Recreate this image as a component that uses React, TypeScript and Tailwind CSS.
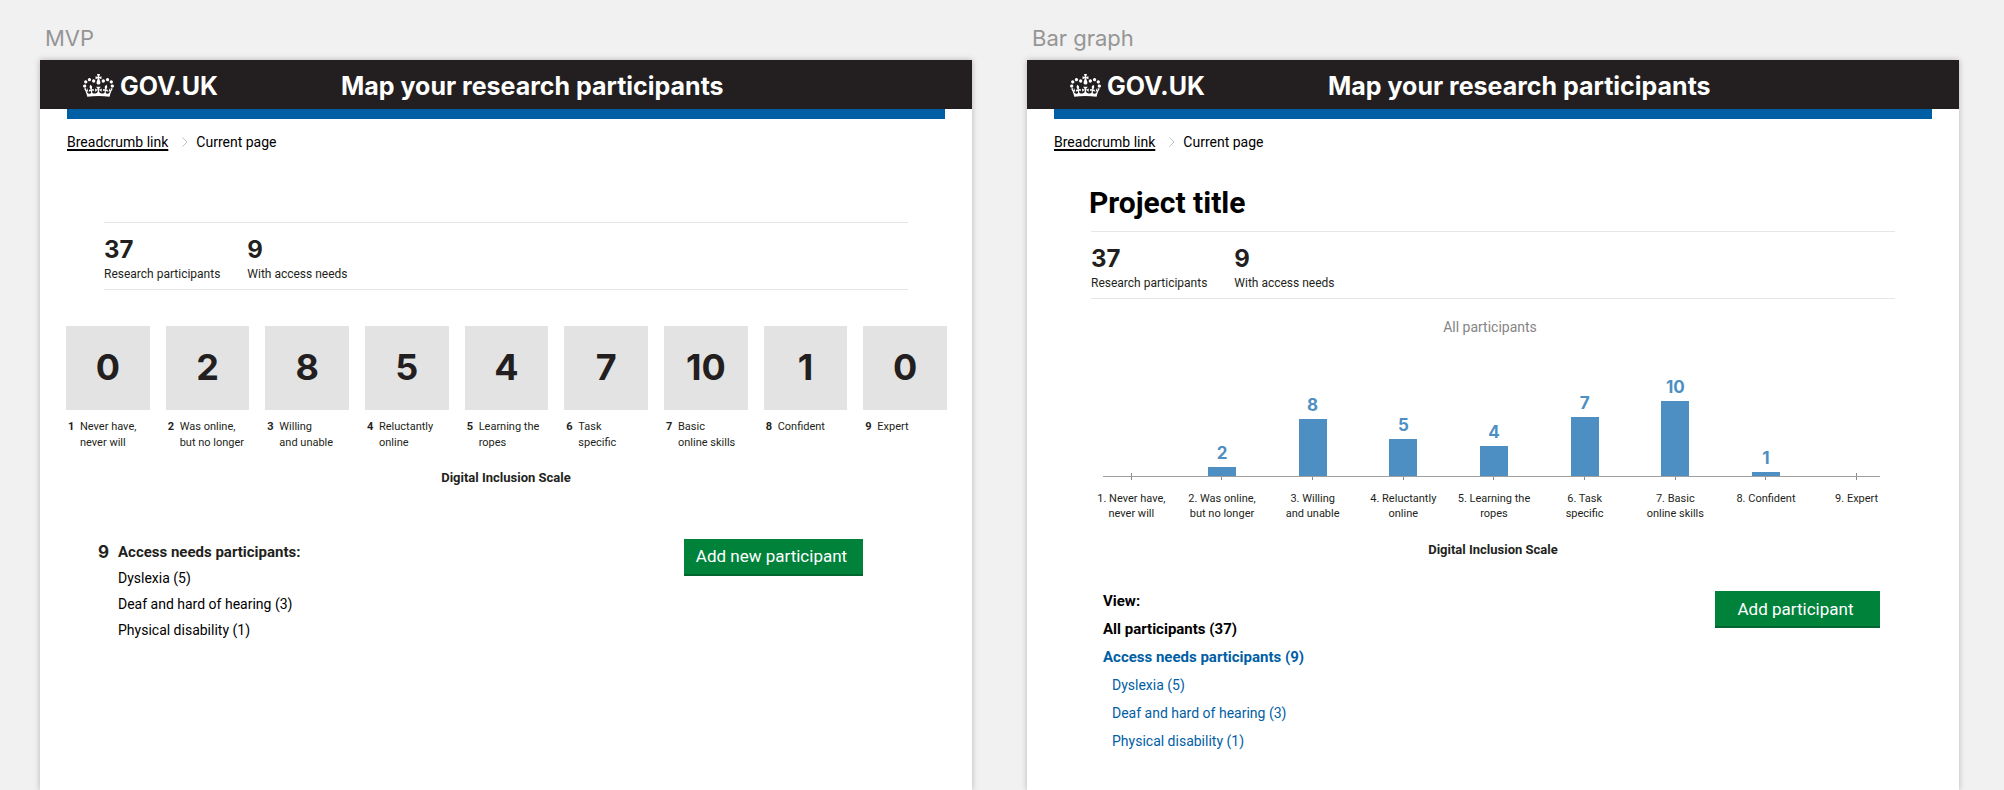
import type { ReactNode } from "react";

type Level = { count: number; lines: string[] };

const levels: Level[] = [
  { count: 0, lines: ["Never have,", "never will"] },
  { count: 2, lines: ["Was online,", "but no longer"] },
  { count: 8, lines: ["Willing", "and unable"] },
  { count: 5, lines: ["Reluctantly", "online"] },
  { count: 4, lines: ["Learning the", "ropes"] },
  { count: 7, lines: ["Task", "specific"] },
  { count: 10, lines: ["Basic", "online skills"] },
  { count: 1, lines: ["Confident"] },
  { count: 0, lines: ["Expert"] },
];

// Bar heights in pixels, one for each level of the scale.
const barHeights = [0, 9, 57, 37, 30, 59, 75, 4, 0];

const accessNeeds = ["Dyslexia (5)", "Deaf and hard of hearing (3)", "Physical disability (1)"];

function Crown() {
  return (
    <svg viewBox="0 0 132 97" className="h-[23px] w-[31px]" fill="currentColor" fillRule="evenodd" aria-hidden="true">
      <path d="M25 30.2c3.5 1.5 7.7-.2 9.1-3.7 1.5-3.6-.2-7.8-3.9-9.2-3.6-1.4-7.6.3-9.1 3.9-1.4 3.5.3 7.5 3.9 9zM9 39.5c3.6 1.5 7.8-.2 9.2-3.7 1.5-3.6-.2-7.8-3.9-9.1-3.6-1.5-7.6.2-9.1 3.8-1.4 3.5.3 7.5 3.8 9zM4.4 57.2c3.5 1.5 7.7-.2 9.1-3.8 1.5-3.6-.2-7.7-3.9-9.1-3.5-1.5-7.6.3-9.1 3.8-1.4 3.5.3 7.6 3.9 9.1zm38.3-21.4c3.5 1.5 7.7-.2 9.1-3.8 1.5-3.6-.2-7.7-3.9-9.1-3.6-1.5-7.6.3-9.1 3.8-1.3 3.6.4 7.7 3.9 9.1zm64.4-5.6c-3.6 1.5-7.8-.2-9.1-3.7-1.5-3.6.2-7.8 3.8-9.2 3.6-1.4 7.7.3 9.2 3.9 1.3 3.5-.4 7.5-3.9 9zm15.9 9.3c-3.6 1.5-7.7-.2-9.1-3.7-1.5-3.6.2-7.8 3.7-9.1 3.6-1.5 7.7.2 9.2 3.8 1.5 3.5-.3 7.5-3.8 9zm4.7 17.7c-3.6 1.5-7.8-.2-9.2-3.8-1.5-3.6.2-7.7 3.9-9.1 3.6-1.5 7.7.3 9.2 3.8 1.3 3.5-.4 7.6-3.9 9.1zM89.3 35.8c-3.6 1.5-7.8-.2-9.2-3.8-1.4-3.6.2-7.7 3.9-9.1 3.6-1.5 7.7.3 9.2 3.8 1.4 3.6-.3 7.7-3.9 9.1zM69.7 17.7l8.9 4.7V9.3l-8.9 2.8c-.2-.3-.5-.6-.9-.9L72.4 0H59.6l3.5 11.2c-.3.3-.6.5-.9.9l-8.8-2.8v13.1l8.8-4.7c.3.3.6.7.9.9l-5 15.4v.1c-.2.8-.4 1.6-.4 2.4 0 4.1 3.1 7.5 7 8.1h.2c.3 0 .7.1 1 .1.4 0 .7 0 1-.1h.2c4-.6 7.1-4.1 7.1-8.1 0-.8-.1-1.7-.4-2.4V34l-5.1-15.4c.4-.2.7-.6 1-.9zM66 92.8c16.9 0 32.8 1.1 47.1 3.2 4-16.9 8.9-26.7 14-33.5l-9.6-3.4c1 4.9 1.1 7.2 0 10.2-1.5-1.4-3-4.3-4.2-8.7L108.6 76c2.8-2 5-3.2 7.5-3.3-4.4 9.4-10 11.9-13.6 11.2-4.3-.8-6.3-4.6-5.6-7.9 1-4.7 5.7-5.9 8-.5 4.3-8.7-3-11.4-7.6-8.8 7.1-7.2 7.9-13.5 2.1-21.1-8 6.1-8.1 12.3-4.5 20.8-4.7-5.4-12.1-2.5-9.5 6.2 3.4-5.2 7.9-2 7.2 3.1-.6 4.3-6.4 7.8-13.5 7.2-10.3-.9-10.9-8-11.2-13.8 2.5-.5 7.1 1.8 11 7.3L80.2 60c-4.1 4.4-8 5.3-12.3 5.4 1.4-4.4 8-11.6 8-11.6H55.5s6.4 7.2 7.9 11.6c-4.2-.1-8-1-12.3-5.4l1.4 16.4c3.9-5.5 8.5-7.7 10.9-7.3-.3 5.8-.9 12.8-11.1 13.8-7.2.6-12.9-2.9-13.5-7.2-.7-5 3.8-8.3 7.1-3.1 2.7-8.7-4.6-11.6-9.4-6.2 3.7-8.5 3.6-14.7-4.6-20.8-5.8 7.6-5 13.9 2.2 21.1-4.7-2.6-11.9.1-7.7 8.8 2.3-5.5 7.1-4.2 8.1.5.7 3.3-1.3 7.1-5.7 7.9-3.5.7-9-1.8-13.5-11.2 2.5.1 4.7 1.3 7.5 3.3l-4.7-15.4c-1.2 4.4-2.7 7.2-4.3 8.7-1.1-3-.9-5.3 0-10.2l-9.5 3.4c5 6.9 9.9 16.7 14 33.5 14.8-2.1 30.8-3.2 47.7-3.2z" />
    </svg>
  );
}

function Board({ name, children }: { name: string; children: ReactNode }) {
  return (
    <section className="flex min-w-0 flex-1 flex-col">
      <h2 className="mb-2 pl-[5px] font-['Inter',sans-serif] text-[22px] leading-7 font-normal text-[#959595]">{name}</h2>
      <div className="flex-1 bg-white shadow-[0_0_6px_rgba(0,0,0,0.25)]">
        <header className="flex h-[49px] items-center bg-[#231f20] pt-0.5 pl-[43px] font-['Inter',sans-serif] text-[25px] leading-9 font-bold text-white">
          <a href="#" className="flex w-[258px] items-center gap-1.5">
            <Crown />
            GOV.UK
          </a>
          <p className="whitespace-nowrap">Map your research participants</p>
        </header>
        <div className="mx-[27px] h-2.5 bg-[#005ea5]" />
        <nav aria-label="Breadcrumb" className="mt-3 flex items-center pl-[27px] text-sm leading-[22px] text-black">
          <a href="#" className="underline decoration-2 underline-offset-2">
            Breadcrumb link
          </a>
          <svg viewBox="0 0 6 10" className="mr-2 ml-3.5 h-2.5 w-1.5" fill="none" stroke="#bfc1c3" aria-hidden="true">
            <path d="M.5.5 5 5 .5 9.5" />
          </svg>
          <span>Current page</span>
        </nav>
        {children}
      </div>
    </section>
  );
}

function Stats() {
  return (
    <dl className="mx-16 flex gap-[27px] border-y border-[#e6e6e6] pt-[13px] pb-[5px]">
      {[
        ["37", "Research participants"],
        ["9", "With access needs"],
      ].map(([value, label]) => (
        <div key={label} className="flex flex-col-reverse">
          <dt className="text-xs leading-5">{label}</dt>
          <dd className="font-['Inter',sans-serif] text-2xl leading-7 font-bold">{value}</dd>
        </div>
      ))}
    </dl>
  );
}

function TileBoard() {
  return (
    <Board name="MVP">
      <div className="mt-[69px]">
        <Stats />
      </div>
      <ol className="mt-9 mr-[25px] ml-[26px] grid grid-cols-9 gap-4">
        {levels.map((level, i) => (
          <li key={level.lines[0]}>
            <div className="flex aspect-square items-center justify-center bg-[#e3e3e3] pb-0.5 font-['Inter',sans-serif] text-4xl font-bold">
              {level.count}
            </div>
            <div className="mt-[9px] flex pl-0.5 text-[11px] leading-4 whitespace-nowrap">
              <span className="w-3 font-bold">{i + 1}</span>
              <span>
                {level.lines.map((line) => (
                  <span key={line} className="block">
                    {line}
                  </span>
                ))}
              </span>
            </div>
          </li>
        ))}
      </ol>
      <p className="mt-[17px] text-center text-[13px] leading-5 font-bold">Digital Inclusion Scale</p>
      <div className="mt-[51px] flex items-start justify-between pr-[109px] pl-[58px]">
        <div className="flex leading-[26px]">
          <span className="w-5 font-['Inter',sans-serif] text-[17px] font-bold">9</span>
          <div className="text-sm leading-[26px]">
            <h3 className="text-[15px] leading-[26px] font-bold">Access needs participants:</h3>
            <ul className="text-black">
              {accessNeeds.map((need) => (
                <li key={need}>{need}</li>
              ))}
            </ul>
          </div>
        </div>
        <button
          type="button"
          className="h-[37px] w-[179px] border-b-2 border-[#00652f] bg-[#00823b] pt-0.5 pr-1 text-[17px] text-white"
        >
          Add new participant
        </button>
      </div>
    </Board>
  );
}

function GraphBoard() {
  return (
    <Board name="Bar graph">
      <h1 className="mt-8 mb-2.5 ml-[62px] text-[30px] leading-9 font-bold text-black">Project title</h1>
      <Stats />
      <p className="mt-[18px] pr-1.5 text-center text-sm leading-5 text-[#858585]">All participants</p>
      <div className="mr-[57px] ml-[59px]">
        <div className="grid h-[139px] grid-cols-9 items-end">
          {levels.map((level, i) => (
            <div key={level.lines[0]} className="flex flex-col items-center">
              {level.count > 0 ? (
                <>
                  <span className="mb-1 font-['Inter',sans-serif] text-[17px] leading-5 font-bold text-[#4d8fc3]">
                    {level.count}
                  </span>
                  <div className="w-7 bg-[#4d8fc3]" style={{ height: barHeights[i] }} />
                </>
              ) : (
                <div className="h-[3px] w-px bg-[#8a8a8a]" />
              )}
            </div>
          ))}
        </div>
        <div className="mr-[22px] ml-[17px] h-px bg-[#a0a0a0]" />
        <ol className="grid grid-cols-9 text-center text-[11px] leading-[15px] whitespace-nowrap">
          {levels.map((level, i) => (
            <li key={level.lines[0]} className="flex flex-col items-center">
              <span className="mb-[11px] h-[3px] w-px bg-[#8a8a8a]" />
              {level.lines.map((line, n) => (
                <span key={line}>{n === 0 ? `${i + 1}. ${line}` : line}</span>
              ))}
            </li>
          ))}
        </ol>
      </div>
      <p className="mt-[19px] text-center text-[13px] leading-5 font-bold">Digital Inclusion Scale</p>
      <div className="mt-[27px] flex items-start justify-between pr-[79px] pl-[76px]">
        <div className="text-sm leading-7 text-[#005ea5]">
          <h3 className="text-[15px] leading-7 font-bold text-black">View:</h3>
          <ul>
            <li className="text-[15px] leading-7 font-bold text-black">All participants (37)</li>
            <li>
              <a href="#" className="block text-[15px] leading-7 font-bold">
                Access needs participants (9)
              </a>
              <ul className="pl-[9px]">
                {accessNeeds.map((need) => (
                  <li key={need}>
                    <a href="#">{need}</a>
                  </li>
                ))}
              </ul>
            </li>
          </ul>
        </div>
        <button
          type="button"
          className="mt-1 h-[37px] w-[165px] border-b-2 border-[#00652f] bg-[#00823b] pt-0.5 pr-1 text-[17px] text-white"
        >
          Add participant
        </button>
      </div>
    </Board>
  );
}

export default function App() {
  return (
    <main className="flex min-h-screen gap-[55px] bg-[#f1f1f1] pt-6 pr-[45px] pl-10 font-['Roboto',sans-serif] text-[#231f20]">
      <TileBoard />
      <GraphBoard />
    </main>
  );
}
